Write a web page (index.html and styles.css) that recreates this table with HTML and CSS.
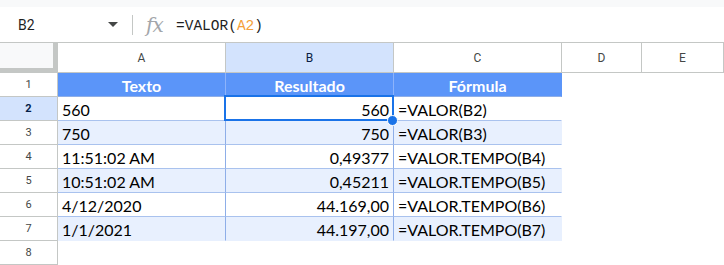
FILE: index.html
```html
<!DOCTYPE html>
<html lang="pt">
<head>
<meta charset="utf-8">
<title>VALOR</title>
<link rel="stylesheet" href="styles.css">
</head>
<body>
<div class="topstrip"></div>
<div class="formula-bar">
  <div class="name-box"><span class="cell-ref">B2</span><span class="caret"></span></div>
  <div class="divider"></div>
  <span class="fx">fx</span>
  <div class="formula">=VALOR(<span class="ref">A2</span>)</div>
</div>
<div class="sheet">
  <div class="corner"></div>
  <div class="col-head">A</div>
  <div class="col-head sel">B</div>
  <div class="col-head">C</div>
  <div class="col-head">D</div>
  <div class="col-head">E</div>

  <div class="row-head">1</div>
  <div class="cell head">Texto</div>
  <div class="cell head">Resultado</div>
  <div class="cell head edge">Fórmula</div>
  <div class="blank"></div><div class="blank"></div>

  <div class="row-head sel">2</div>
  <div class="cell">560</div>
  <div class="cell num active">560<span class="handle"></span></div>
  <div class="cell edge">=VALOR(B2)</div>
  <div class="blank"></div><div class="blank"></div>

  <div class="row-head">3</div>
  <div class="cell alt">750</div>
  <div class="cell alt num">750</div>
  <div class="cell alt edge">=VALOR(B3)</div>
  <div class="blank"></div><div class="blank"></div>

  <div class="row-head">4</div>
  <div class="cell">11:51:02 AM</div>
  <div class="cell num">0,49377</div>
  <div class="cell edge">=VALOR.TEMPO(B4)</div>
  <div class="blank"></div><div class="blank"></div>

  <div class="row-head">5</div>
  <div class="cell alt">10:51:02 AM</div>
  <div class="cell alt num">0,45211</div>
  <div class="cell alt edge">=VALOR.TEMPO(B5)</div>
  <div class="blank"></div><div class="blank"></div>

  <div class="row-head">6</div>
  <div class="cell">4/12/2020</div>
  <div class="cell num">44.169,00</div>
  <div class="cell edge">=VALOR.TEMPO(B6)</div>
  <div class="blank"></div><div class="blank"></div>

  <div class="row-head">7</div>
  <div class="cell alt foot">1/1/2021</div>
  <div class="cell alt num foot">44.197,00</div>
  <div class="cell alt edge foot">=VALOR.TEMPO(B7)</div>
  <div class="blank"></div><div class="blank"></div>

  <div class="row-head">8</div>
  <div class="blank"></div><div class="blank"></div><div class="blank"></div>
  <div class="blank"></div><div class="blank"></div>
</div>
</body>
</html>
```

FILE: styles.css
```css
html, body {
  margin: 0;
  padding: 0;
  background: #fff;
}

body {
  width: 724px;
  height: 265px;
  overflow: hidden;
}

/* toolbar edge above the formula bar */
.topstrip {
  height: 7px;
  background: #f8f9fa;
}

/* name box + formula input */
.formula-bar {
  height: 35px;
  display: flex;
  align-items: center;
  border-bottom: 1px solid #c4c7c5;
}

.name-box {
  width: 132px;
  box-sizing: border-box;
  padding: 0 14px 0 18px;
  display: flex;
  align-items: center;
  justify-content: space-between;
  font: 14px Roboto, "Liberation Sans", sans-serif;
  color: #1f1f1f;
}

.caret {
  width: 0;
  height: 0;
  border-left: 5px solid transparent;
  border-right: 5px solid transparent;
  border-top: 5px solid #444746;
}

.divider {
  width: 1px;
  height: 20px;
  background: #c4c7c5;
}

.fx {
  flex: 0 0 43px;
  box-sizing: border-box;
  padding: 1px 0 0 13px;
  font: italic 20px "DejaVu Serif", serif;
  color: #a3a6aa;
  letter-spacing: -1px;
}

.formula {
  padding-top: 3px;
  font: 14.5px "Liberation Mono", monospace;
  color: #1f1f1f;
}

.formula .ref {
  color: #f4a03a;
}

/* grid */
.sheet {
  display: grid;
  grid-template-columns: 58px 168px 168px 168px 80px 82px;
  grid-template-rows: 30px repeat(8, 24px);
}

.sheet > div {
  box-sizing: border-box;
  min-width: 0;
}

.corner {
  background: #f8f9fa;
  border-right: 1px solid #c4c7c5;
  border-bottom: 1px solid #c4c7c5;
  box-shadow: inset -4px -4px 0 #c4c7c5;
}

.col-head {
  display: flex;
  align-items: center;
  justify-content: center;
  border-right: 1px solid #c4c7c5;
  border-bottom: 1px solid #c4c7c5;
  font: 12px Roboto, "Liberation Sans", sans-serif;
  color: #444746;
}

.col-head.sel {
  background: #d3e3fd;
  color: #0b1d44;
}

.row-head {
  display: flex;
  align-items: center;
  justify-content: center;
  border-right: 1px solid #c4c7c5;
  border-bottom: 1px solid #c4c7c5;
  font: 11px Roboto, "Liberation Sans", sans-serif;
  color: #444746;
}

.row-head.sel {
  background: #d3e3fd;
  color: #041e49;
  font-weight: bold;
}

.cell {
  display: flex;
  align-items: flex-end;
  padding: 0 4px 1px;
  font: 16px Lato, "Liberation Sans", sans-serif;
  line-height: 19px;
  color: #000;
  white-space: nowrap;
  border-right: 1px solid #8eaee8;
  border-bottom: 1px solid #a9c2ee;
}

.cell.alt {
  background: #e8f0fe;
}

.cell.head {
  background: #5b95f9;
  color: #fff;
  font-weight: bold;
  justify-content: center;
  border-right-color: #8db3fb;
  border-bottom-color: #8eaee8;
}

.cell.num {
  justify-content: flex-end;
}

.cell.edge {
  border-right-color: transparent;
}

.cell.foot {
  border-bottom-color: transparent;
}

/* active cell outline and fill handle */
.cell.active {
  position: relative;
}

.cell.active::after {
  content: "";
  position: absolute;
  left: -2px;
  top: -2px;
  width: 170px;
  height: 26px;
  box-sizing: border-box;
  border: 2px solid #1a73e8;
}

.handle {
  position: absolute;
  right: -5px;
  bottom: -6px;
  width: 11px;
  height: 11px;
  box-sizing: border-box;
  border-radius: 50%;
  background: #1a73e8;
  border: 1px solid #fff;
  z-index: 2;
}
```
